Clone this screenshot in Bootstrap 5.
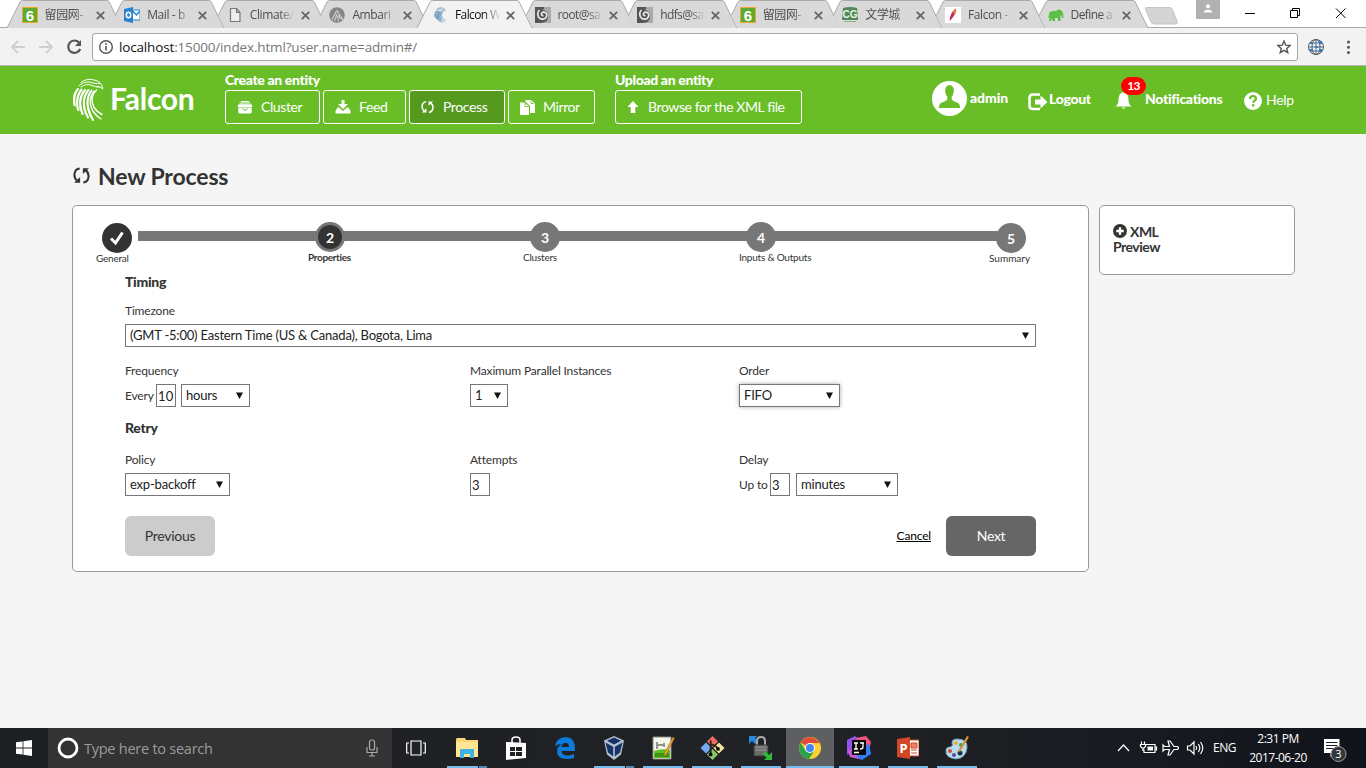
<!DOCTYPE html>
<html lang="en">
<head>
<meta charset="utf-8">
<title>Falcon Web UI</title>
<link href="https://cdn.jsdelivr.net/npm/bootstrap@5.3.0/dist/css/bootstrap.min.css" rel="stylesheet">
<style>
html,body{height:100%}
body{width:1366px;height:768px;overflow:hidden;background:#f5f5f5;font-family:Lato,"Noto Sans CJK SC",sans-serif;font-size:12px;line-height:16px;color:#333;letter-spacing:-.17px}
svg{display:block;flex:none}
.win{font-family:"Open Sans","Noto Sans CJK SC",sans-serif;letter-spacing:0}
/* browser chrome */
.tabstrip{height:28px;background:#fff;padding-left:6.600px;border-bottom:1px solid #a9a9a9}
.btab{flex:0 0 102.6px;height:28px;padding:7px 0 0 15px;position:relative;color:#4d4d4d}
.btab .shape{position:absolute;left:0;top:0}
.btab.on{z-index:2;color:#111}
.btab .fav,.btab .ttl,.btab .cls{position:relative}
.btab .ttl{width:45px;margin-left:7px;overflow:hidden;white-space:nowrap;font-size:12px;letter-spacing:-.4px;line-height:16px;-webkit-mask-image:linear-gradient(90deg,#000 65%,transparent 100%);mask-image:linear-gradient(90deg,#000 65%,transparent 100%)}
.btab .cls{margin:4px 0 0 6px}
.usr{width:24px;height:19px;background:#b1b1b1;margin-left:14.500px}
.toolbar{height:38px;background:#f2f2f2;border-bottom:1px solid #b5b5b5;padding:5px 0 0 10px}
.urlbox{width:1206px;height:28px;background:#fff;border:1px solid #a6a6a6;border-radius:3px;margin-left:10px;padding:0 6px 0 5px}
.urltext{font-size:13.5px;letter-spacing:-.16px;color:#777;margin-left:5px}
.urltext b{font-weight:400;color:#111}
/* falcon header */
.fhead{height:68px;background:#69be28;color:#fff;padding-left:72px}
.brand{width:153px;padding:12px 0 0 1px}
.brandname{font-size:30px;font-weight:700;line-height:36px;letter-spacing:-.25px;margin:2px 0 0 6px}
.hlabel{font-size:14px;font-weight:900;line-height:16px;height:24px;padding-top:6px;letter-spacing:-.35px;white-space:nowrap}
.hbtn{height:34px;border:1px solid #fff;border-radius:3px;color:#fff;font-size:14px;letter-spacing:-.4px;line-height:32px;padding:0 0 0 11px;white-space:nowrap}
.hbtn.act{background:#55991f}
.hbtn svg{margin-right:8px}
.hlink{font-size:14px;font-weight:900;letter-spacing:-.3px;line-height:18px;white-space:nowrap}
.nbadge{position:absolute;left:6px;top:-14px;width:25px;height:18px;border-radius:9px;background:#f00;font-size:12px;font-weight:700;line-height:18px;text-align:center;letter-spacing:-.6px}
/* page */
.ptitle{height:71px;padding:28px 0 0 73px}
.ptitle h1{font-size:23px;font-weight:700;line-height:28px;letter-spacing:-.15px;margin:0 0 0 8px}
.panel{background:#fff;border:1px solid #999;border-radius:5px}
.wiz{width:1017px;height:367px;padding:16px 52px 0 52px}
.xml{width:196px;height:70px;padding:18px 13px;font-size:14px;font-weight:700;line-height:15px;letter-spacing:-.5px}
.steps{display:grid;grid-template-columns:212px 215px 216px 250px 60px;margin-left:-29px;height:51px;position:relative}
.steps:before{content:"";position:absolute;left:42px;width:862px;top:9px;height:10px;background:#777}
.step{position:relative;font-size:10px;line-height:12px;white-space:nowrap;letter-spacing:-.22px}
.dot{width:30px;height:30px;border-radius:50%;background:#777;color:#fff;font-size:14px;font-weight:700;line-height:31px;text-align:center;margin-left:7px;margin-bottom:-1px}
.step.low{padding-top:1px}
.step.low:last-child{letter-spacing:0}
.dot.dark{background:#333}
.dot.cur{border:3px solid #777;line-height:25px}
.sect{font-size:14px;font-weight:900;letter-spacing:-.3px;line-height:18px;margin:0}
.fgrid{display:grid;grid-template-columns:345px 269px 297px}
.lab{display:block;line-height:16px;margin-bottom:5px;height:16px}
.fld{height:23px;border:1px solid #777;border-radius:0;background:#fff;color:#222;font-size:13px;letter-spacing:-.2px;line-height:21px;padding:0 0 0 4px;appearance:none;font-family:inherit;outline:0}
select.fld{background:#fff url("data:image/svg+xml,%3Csvg xmlns='http://www.w3.org/2000/svg' width='7' height='7'%3E%3Cpath d='M0 .5h7L3.5 7z' fill='%23111'/%3E%3C/svg%3E") no-repeat right 6px top 7px}
input.fld{width:20px;padding:0 0 0 1px}
.focus{box-shadow:0 0 4px rgba(0,0,0,.35)}
.wbtn{width:90px;height:40px;border:0;border-radius:6px;font-size:14px;letter-spacing:-.3px;padding:0}
/* taskbar */
.taskbar{height:40px;background:linear-gradient(90deg,#1d2023,#212225 60%,#171a20 85%,#10131a);color:#fff}
.search{width:344px;height:40px;background:#333;color:#9b9b9b;font-size:14.5px;letter-spacing:-.25px;padding:0 14px 0 9px}
.task{width:48px;margin-right:1px;height:40px;position:relative;display:flex;align-items:center;justify-content:center}
.task.run:after{content:"";position:absolute;left:4px;right:4px;bottom:0;height:2px;background:#76b9ed}
.task.multi:after{background:linear-gradient(90deg,#76b9ed 31px,#222 31px,#222 32px,#5488b0 32px)}
.task.front{background:#5d5f61}
.task.front:after{left:0;right:0}
.clock{font-size:12px;line-height:19px;letter-spacing:-.5px;width:64px;text-align:center;margin-left:9px}
</style>
</head>
<body class="d-flex flex-column">
<svg width="0" height="0" class="position-absolute">
<defs>
<symbol id="tab" viewBox="0 0 118 28"><path d="M6.2 15.6 13 2q.8-1.500 2.500-1.500H100q1.500 0 2.200 1.500L115 28H12.400z" fill="#d9d9d9"/><path d="M6.200 15.600 13 2q.8-1.500 2.500-1.500H100q1.500 0 2.200 1.500L115 28" fill="none" stroke="#aaa"/></symbol>
<symbol id="tabfull" viewBox="0 0 118 28"><path d="M0 28 13 2q.8-1.500 2.500-1.500H100q1.500 0 2.200 1.500L115 28" fill="currentColor" stroke="#aaa"/></symbol>
<symbol id="x" viewBox="0 0 8 8"><path d="M.7.7l6.600 6.600M7.300.7.700 7.300" stroke="#666" stroke-width="1.600"/></symbol>
<symbol id="six" viewBox="0 0 16 16"><path d="M.5.5h15v15H.5z" fill="#5aab2f" stroke="#f0a62c"/><text x="8" y="13.500" text-anchor="middle" font-family="Liberation Sans" font-weight="700" font-size="15" fill="#fff">6</text></symbol>
<symbol id="swirl" viewBox="0 0 16 16"><path d="M0 0h16v16H0z" fill="#555"/><path d="M9 0h7v16H6q8-1 7-8-1-5-6-5 3-1 2-3z" fill="#aaa"/><path d="M8.500 8.500Q6 9 6.500 6.500 8 4 11 6q2 3-1 5.500-4 2-6.500-1.500-2-4 1-7" fill="none" stroke="#e8e8e8" stroke-width="1.700"/></symbol>
<symbol id="cycle" viewBox="0 0 16 16"><path d="M6.300 1.500Q2 1.800 1.300 7q0 4 2.800 6M9.700 14.500q4.300-.3 5-5.500 0-4-2.800-6" fill="none" stroke="currentColor" stroke-width="1.900"/><path d="M1 14.800h5.700V9.500zM15 1.200H9.300v5.300z" fill="currentColor"/></symbol>
<symbol id="bird" viewBox="0 0 31 44"><g fill="none" stroke="currentColor" stroke-linecap="round"><path d="M8 4.500Q14-.5 22 2.200q7 1.500 7.800 8.800-2-2.500-6-2.200M6 7.500Q13 2 20 5q5 1 7 .5M8 9q6-4 11-1.500 4 2 7 1" stroke-width="1"/><path d="M5 11Q-.5 17 1.500 27M8.500 11.500Q2 20 5 32M12 12Q4 22 9.500 36" stroke-width="2.100"/><path d="M15.500 12Q6.500 23 15 39.500M18.500 12.500Q10 24 20 42" stroke-width="2"/><path d="M21 13Q14 22 19.500 32.500 23 38 28 41M23.500 12Q16 19 21 29.500 24 34 29 36.500" stroke-width="1.400"/><path d="M3.500 14Q1 19 2.500 28.500M10 13Q4 22 7 33M13.500 14Q8 23 12 36M17 14Q10 24 17.500 39.500" stroke-width=".6"/></g></symbol>
</defs></svg>

<div class="tabstrip win d-flex flex-shrink-0">
<div class="btab d-flex"><svg class="shape" style="color:#d9d9d9" width="118" height="28"><use href="#tabfull"/></svg><svg class="fav" width="16" height="16"><use href="#six"/></svg><span class="ttl">留园网-</span><svg class="cls" width="9" height="9"><use href="#x"/></svg></div>
<div class="btab d-flex"><svg class="shape" width="118" height="28"><use href="#tab"/></svg><svg class="fav" width="16" height="16" viewBox="0 0 16 16"><path d="M8 3h8v10H8z" fill="#fff" stroke="#2a82cf"/><path d="M8.500 4l4 4L16 4" fill="none" stroke="#2a82cf" stroke-width="1.500"/><path d="M0 2l9-2v16l-9-2z" fill="#2a82cf"/><ellipse cx="4.500" cy="8" rx="2.200" ry="2.800" fill="none" stroke="#fff" stroke-width="1.500"/></svg><span class="ttl">Mail - b</span><svg class="cls" width="9" height="9"><use href="#x"/></svg></div>
<div class="btab d-flex"><svg class="shape" width="118" height="28"><use href="#tab"/></svg><svg class="fav" width="16" height="16" viewBox="0 0 16 16"><path d="M3.500 1.500h6l3.500 4v9H3.500zM9.500 1.500v4H13" fill="#eee" stroke="#777" stroke-width="1.200"/></svg><span class="ttl">Climate/</span><svg class="cls" width="9" height="9"><use href="#x"/></svg></div>
<div class="btab d-flex"><svg class="shape" width="118" height="28"><use href="#tab"/></svg><svg class="fav" width="16" height="16" viewBox="0 0 16 16"><circle cx="8" cy="8" r="7.800" fill="#858585"/><path d="M8 3l1.500 3L14 12.500l-3-1.500-1.500-3M7.500 4 3 12.500M8 7l-2.500 7M8.500 9l1 5.500" fill="none" stroke="#ccc" stroke-width="1.200"/></svg><span class="ttl">Ambari</span><svg class="cls" width="9" height="9"><use href="#x"/></svg></div>
<div class="btab d-flex on"><svg class="shape" style="color:#f2f2f2" width="118" height="28"><use href="#tabfull"/></svg><svg class="fav" width="16" height="16" style="color:#3e7ca6"><use href="#bird"/></svg><span class="ttl" style="letter-spacing:-.6px">Falcon W</span><svg class="cls" width="9" height="9"><use href="#x"/></svg></div>
<div class="btab d-flex"><svg class="shape" width="118" height="28"><use href="#tab"/></svg><svg class="fav" width="16" height="16"><use href="#swirl"/></svg><span class="ttl" style="letter-spacing:-.6px">root@sa</span><svg class="cls" width="9" height="9"><use href="#x"/></svg></div>
<div class="btab d-flex"><svg class="shape" width="118" height="28"><use href="#tab"/></svg><svg class="fav" width="16" height="16"><use href="#swirl"/></svg><span class="ttl" style="letter-spacing:-.6px">hdfs@sa</span><svg class="cls" width="9" height="9"><use href="#x"/></svg></div>
<div class="btab d-flex"><svg class="shape" width="118" height="28"><use href="#tab"/></svg><svg class="fav" width="16" height="16"><use href="#six"/></svg><span class="ttl">留园网-</span><svg class="cls" width="9" height="9"><use href="#x"/></svg></div>
<div class="btab d-flex"><svg class="shape" width="118" height="28"><use href="#tab"/></svg><svg class="fav" width="16" height="16" viewBox="0 0 16 16"><path d="M1 1q7-2 14 0l1 12H0z" fill="#4f8a55"/><text x="8" y="11" text-anchor="middle" font-family="Liberation Sans" font-size="10" font-weight="700" fill="#e8f3e8">CG</text><path d="M2 14.500h12" stroke="#8cb58f"/></svg><span class="ttl">文学城</span><svg class="cls" width="9" height="9"><use href="#x"/></svg></div>
<div class="btab d-flex"><svg class="shape" width="118" height="28"><use href="#tab"/></svg><svg class="fav" width="16" height="16" viewBox="0 0 16 16"><path d="M0 0h16v16H0z" fill="#fff"/><path d="M4.500 14Q5 6 10.500 1.500 12 5 8 10q-1 2-3.500 4z" fill="#c92a5e"/><path d="M10.500 1.500Q12 4 10 7L7.500 5z" fill="#ee7c2b"/></svg><span class="ttl">Falcon -</span><svg class="cls" width="9" height="9"><use href="#x"/></svg></div>
<div class="btab d-flex"><svg class="shape" width="118" height="28"><use href="#tab"/></svg><svg class="fav" width="16" height="16" viewBox="0 0 16 16"><path d="M1 8q0-4 4-4l3 0q3-3 6 0 2 3 1.500 7h-1.500l-.5-3-1 1v5h-2.500v-3H7v3H4.500l-.5-3-1 3H1l1-4-1 1H0z" fill="#5bbf45"/></svg><span class="ttl" style="letter-spacing:-.6px">Define a</span><svg class="cls" width="9" height="9"><use href="#x"/></svg></div>
<svg class="ms-2" width="38" height="28" viewBox="0 0 38 28"><path d="M3.500 7.500h23q2 0 3 2l5 13q0 1.500-2 1.500H11q-2 0-3-2L2.500 9.500q-.5-2 1-2z" fill="#d4d4d4" stroke="#c4c4c4"/></svg>
<div class="usr d-flex justify-content-center"><svg class="mt-1" width="10" height="10" viewBox="0 0 10 10"><circle cx="5" cy="2.300" r="2" fill="#fff"/><path d="M1 8.500V7q4-3 8 0v1.500z" fill="#fff"/></svg></div>
<svg width="130" height="27" viewBox="0 0 130 27" fill="none" stroke="#000"><path d="M25 13.500h10M70.500 10.500h7v7h-7zM72.500 10V8.500h7v7h-1.500M116 8.500l9.500 9.500M125.500 8.500 116 18"/></svg>
</div>

<div class="toolbar win d-flex flex-shrink-0">
<svg width="72" height="28" viewBox="0 0 72 28" fill="none" stroke-width="1.800"><path d="M15 14H2M8 8l-6 6 6 6M29 14h13M36 8l6 6-6 6" stroke="#cfcfcf"/><path d="M69 9.500A6.200 6.200 0 1 0 70.200 16" stroke="#555" stroke-width="2.200"/><path d="M71 7v6h-6z" fill="#555"/></svg>
<div class="urlbox d-flex align-items-center"><svg width="16" height="16" viewBox="0 0 16 16"><circle cx="8" cy="8" r="6.300" fill="none" stroke="#555" stroke-width="1.400"/><path d="M8 7v4.500M8 4.300v1.600" stroke="#555" stroke-width="1.600"/></svg><span class="urltext"><b>localhost</b>:15000/index.html?user.name=admin#/</span>
<svg class="ms-auto" width="14" height="14" viewBox="0 0 14 14"><path d="M7 1l1.700 4.200 4.400.3-3.400 2.900 1.100 4.300L7 10.300l-3.800 2.400 1.100-4.300L.9 5.500l4.400-.3z" fill="none" stroke="#555" stroke-width="1.400"/></svg></div>
<svg class="ms-2 mt-1" width="50" height="20" viewBox="0 0 50 20"><circle cx="10" cy="10" r="7.500" fill="#eaf2fa" stroke="#555"/><path d="M2.500 10h15M10 2.500v15M4 6h12M4 14h12" stroke="#667" fill="none"/><ellipse cx="10" cy="10" rx="4" ry="7.500" fill="none" stroke="#556"/><path d="M4 5h3v2H4zM13 4h3v3h-3zM3 12h4v2H3zM9 9h3v2H9zM13 12h3v3h-3z" fill="#2e7cc7"/><g fill="#555"><circle cx="42.500" cy="5" r="1.500"/><circle cx="42.500" cy="10.200" r="1.500"/><circle cx="42.500" cy="15.400" r="1.500"/></g></svg>
</div>

<header class="fhead d-flex flex-shrink-0">
<div class="brand d-flex"><svg width="31" height="44"><use href="#bird"/></svg><div class="brandname">Falcon</div></div>
<div style="width:390px"><div class="hlabel">Create an entity</div>
<div class="d-flex">
<div class="hbtn d-flex align-items-center" style="width:95px;margin-right:3px"><svg width="16" height="13" viewBox="0 0 16 13"><path d="M4 0h8v1H4zM2.500 1.600h11v1H2.500zM1.500 3.200h13L15.500 6H.5zM1.300 6.400h13.400V11q0 1.500-1.500 1.500H2.800q-1.500 0-1.500-1.500z" fill="#fff"/><path d="M5.500 7.500q.3 1.600 2.500 1.600t2.500-1.600" fill="none" stroke="#69be28" stroke-width="1"/></svg>Cluster</div>
<div class="hbtn d-flex align-items-center" style="width:83px;margin-right:3px"><svg width="16" height="14" viewBox="0 0 16 14"><path d="M6.500 0h3v4H13L8 9 3 4h3.500z" fill="#fff"/><path d="M2.500 7.500h1.500L8 11l4-3.500h1.500L15.500 11v2.500H.5V11z" fill="#fff"/></svg>Feed</div>
<div class="hbtn act d-flex align-items-center" style="width:96px;margin-right:3px"><svg width="13" height="14" style="margin-right:9px"><use href="#cycle"/></svg>Process</div>
<div class="hbtn d-flex align-items-center" style="width:87px"><svg width="15" height="15" viewBox="0 0 15 15" style="margin-right:8px"><path d="M0 2.500h4.500L9 6.500V15H0z" fill="#fff"/><path d="M5.500 0H11l4 3.500V13H10V6L6.500 2.500H5.500z" fill="#fff"/><path d="M5 2.500v4h4M11 .5v3h3" stroke="#69be28" fill="none" stroke-width=".8"/></svg>Mirror</div>
</div></div>
<div><div class="hlabel">Upload an entity</div><div class="hbtn d-flex align-items-center" style="width:187px"><svg width="12" height="12" viewBox="0 0 12 12" style="margin-right:9px"><path d="M6 0l5.500 6H8.300v6H3.700V6H.5z" fill="#fff"/></svg>Browse for the XML file</div></div>
<div class="d-flex align-items-start" style="margin-left:130px">
<svg style="margin-top:15px" width="35" height="35" viewBox="0 0 35 35"><circle cx="17.500" cy="17.500" r="17.500" fill="#fff"/><path d="M17.500 4q4.500 0 4.300 6.500-.3 3.500-2.100 5v3q1 1.700 6.500 3.500 2 1.500 2 5H6.800q0-3.500 2-5 5.500-1.800 6.500-3.500v-3Q13.400 14 13.200 10.500q-.2-6.500 4.300-6.500z" fill="#69be28"/></svg>
<span class="hlink" style="margin:23px 0 0 3px;width:58px;letter-spacing:-.1px">admin</span>
<svg style="margin-top:27px" width="20" height="18" viewBox="0 0 20 18"><path d="M12 1.500H5Q1.500 1.500 1.500 5v7.500Q1.500 16 5 16h7" fill="none" stroke="#fff" stroke-width="2.600"/><path d="M7 6.500h5.500V2.500L19.500 9l-7 6.500v-4H7z" fill="#fff"/></svg>
<span class="hlink" style="margin:24px 0 0 1px;width:66px">Logout</span>
<div class="position-relative" style="margin-top:25px"><svg width="17" height="19" viewBox="0 0 17 19"><path d="M8.500 1q5 1 5 8 0 4 3 6.500H.5q3-2.500 3-6.500 0-7 5-8z" fill="#fff"/><path d="M6.500 16.500h4q-2 2.500-4 0z" fill="#fff"/></svg><span class="nbadge">13</span></div>
<span class="hlink" style="margin:24px 0 0 13px;width:99px">Notifications</span>
<svg style="margin-top:26px" width="18" height="18" viewBox="0 0 18 18"><circle cx="9" cy="9" r="9" fill="#fff"/><path d="M6 7q0-3 3-3t3 2.600q0 1.500-1.600 2.200-1.100.6-1.100 2" fill="none" stroke="#69be28" stroke-width="2.200"/><path d="M8 12.200h2.400v2.300H8z" fill="#69be28"/></svg>
<span class="hlink" style="margin:25px 0 0 4px;font-weight:400">Help</span>
</div>
</header>

<main class="flex-grow-1">
<div class="ptitle d-flex"><svg style="margin-top:5px" width="17" height="17"><use href="#cycle"/></svg><h1>New Process</h1></div>
<div class="d-flex align-items-start" style="margin-left:72px;gap:10px">
<section class="panel wiz">
<div class="steps">
<div class="step low"><div class="dot dark" style="margin-left:6px"><svg width="30" height="30" viewBox="0 0 30 30"><path d="M9 15.500l4.500 4.500L20.500 9.500" fill="none" stroke="#fff" stroke-width="3"/></svg></div>General</div>
<div class="step fw-bold" style="letter-spacing:-.35px"><div class="dot dark cur">2</div>Properties</div>
<div class="step"><div class="dot">3</div>Clusters</div>
<div class="step"><div class="dot">4</div>Inputs &amp; Outputs</div>
<div class="step low"><div class="dot">5</div>Summary</div>
</div>
<h2 class="sect">Timing</h2>
<label class="lab" style="margin-top:12px">Timezone</label>
<select class="fld w-100 d-block"><option>(GMT -5:00) Eastern Time (US &amp; Canada), Bogota, Lima</option></select>
<div class="fgrid" style="margin-top:16px">
<div><label class="lab">Frequency</label><div class="d-flex align-items-center"><span style="width:31px">Every</span><input class="fld" value="10" style="letter-spacing:.2px"><select class="fld" style="width:69px;margin-left:5px"><option>hours</option></select></div></div>
<div><label class="lab">Maximum Parallel Instances</label><select class="fld" style="width:38px"><option>1</option></select></div>
<div><label class="lab">Order</label><select class="fld focus" style="width:101px"><option>FIFO</option></select></div>
</div>
<h2 class="sect" style="margin-top:12px">Retry</h2>
<div class="fgrid" style="margin-top:15px">
<div><label class="lab">Policy</label><select class="fld" style="width:105px"><option>exp-backoff</option></select></div>
<div><label class="lab">Attempts</label><input class="fld" value="3"></div>
<div><label class="lab">Delay</label><div class="d-flex align-items-center"><span style="width:31px" class="text-nowrap">Up to</span><input class="fld" value="3"><select class="fld" style="width:102px;margin-left:6px"><option>minutes</option></select></div></div>
</div>
<div class="d-flex align-items-center" style="margin-top:20px"><button class="wbtn" style="background:#ccc;color:#333">Previous</button><a class="ms-auto text-black text-decoration-underline" style="margin-right:15px">Cancel</a><button class="wbtn text-white" style="background:#666">Next</button></div>
</section>
<aside class="panel xml"><div class="d-flex"><svg width="14" height="14" viewBox="0 0 13 13" style="margin-right:3px"><circle cx="6.500" cy="6.500" r="6.500" fill="#333"/><path d="M6.500 3v7M3 6.500h7" stroke="#fff" stroke-width="2.200"/></svg>XML</div>Preview</aside>
</div>
</main>

<footer class="taskbar win d-flex align-items-center flex-shrink-0">
<div class="d-flex justify-content-center" style="width:48px"><svg width="16" height="16" viewBox="0 0 16 16"><path d="M0 2.300 6.600 1.400v6.200H0zM7.400 1.300 16 0v7.600H7.400zM0 8.400h6.600v6.200L0 13.700zM7.400 8.400H16V16l-8.600-1.300z" fill="#fff"/></svg></div>
<div class="search d-flex align-items-center"><svg width="22" height="22" viewBox="0 0 22 22"><circle cx="11" cy="11" r="9" fill="none" stroke="#fff" stroke-width="2.800"/></svg><span style="margin:2px 0 0 5px">Type here to search</span><svg class="ms-auto" width="12" height="18" viewBox="0 0 12 18" fill="none" stroke="#aaa" stroke-width="1.200"><rect x="3.500" y="1" width="5" height="10" rx="2"/><path d="M1 8v5.500h10V8M6 13.500V17M3 17h6"/></svg></div>
<div class="task"><svg width="20" height="16" viewBox="0 0 20 16" fill="none" stroke="#fff" stroke-width="1.200"><path d="M5 1h10v14H5zM3 3H.7v10H3M17 3h2.300v10H17"/></svg></div>
<div class="task run multi" style="margin-left:2px"><svg width="22" height="22" viewBox="0 0 22 22"><path d="M0 3q0-2 1-2h8l1 2h12v17H0z" fill="#f9d977"/><path d="M0 5h22v15H0z" fill="#ffe694"/><path d="M4 12h14v9h-4v-4H8v4H4z" fill="#3eb3e6"/></svg></div>
<div class="task"><svg width="22" height="24" viewBox="0 0 22 24"><path d="M7 7V4q0-3 4-3t4 3v3" fill="none" stroke="#fff" stroke-width="1.500"/><path d="M1 6l20 1v15L1 24z" fill="#fff"/><path d="M5 11h5v4H5zM11 11h6v4h-6zM5 16h5v4H5zM11 16h6v4h-6z" fill="#222"/></svg></div>
<div class="task"><svg width="20" height="22" viewBox="0 0 20 22"><path d="M0 10Q1 1 10 0q10 0 10 12v2H6.500q.5 4.500 6 4.500 3 0 6.500-1.500v4q-3 1-7 1Q2 22 2 14q0-5 5-7Q2 7 0 10zM6.500 10h7.500q0-4-3.500-4-3.500 0-4 4z" fill="#0a7bdb" fill-rule="evenodd"/></svg></div>
<div class="task run multi"><svg width="20" height="24" viewBox="0 0 20 24"><path d="M10 0l10 4.500-3 14L10 24l-7-5.500L0 4.500z" fill="#b4c1d2"/><path d="M10 1.500l7 3.300L10 8.500 3 4.800z" fill="#163463"/><path d="M1.500 6.500l7.700 4.200v9.800L4 16.500zM18.500 6.500l-7.700 4.200v9.800l5.200-4z" fill="#163463"/></svg></div>
<div class="task run"><svg width="23" height="24" viewBox="0 0 23 24"><path d="M1 1h18v22H1z" fill="#f4f7e8" stroke="#888"/><path d="M2 15q8-3 16-1v8H2z" fill="#62bd20"/><path d="M5 6v7M6 9h5M12 7v4" stroke="#333"/><path d="M3 17h14v4H3z" fill="#3c9411"/><path d="M21 1l1.500 1L14 19l-2 1 .5-3z" fill="#f0a52e" stroke="#9b6321" stroke-width=".5"/></svg></div>
<div class="task run"><svg width="25" height="24" viewBox="0 0 26 26"><path d="M13 0l6 6-6 6-6-6z" fill="#ef6a5f"/><path d="M6 7l6 6-6 6-6-6z" fill="#72a9f2"/><path d="M20 7l6 6-6 6-6-6z" fill="#f5e79a"/><path d="M13 14l6 6-6 6-6-6z" fill="#8bc565"/><path d="M11 5v15M11 9q7 1 7 5" fill="none" stroke="#29231f" stroke-width="2"/><circle cx="11" cy="20" r="2"/><circle cx="19" cy="14" r="2"/></svg></div>
<div class="task run"><svg width="24" height="24" viewBox="0 0 24 24"><path d="M0 0h8L6 2l3 3-3 3-3-3-3 3z" fill="#2688df"/><path d="M8 10V5q0-4 4-4t4 4v5" fill="none" stroke="#aaa" stroke-width="2"/><path d="M5 9h14v11H5z" fill="#6a6a6a" stroke="#383838"/><path d="M6 11h12M6 14h12" stroke="#999"/><path d="M23 16v8h-8l2.500-2.500-4-4 2.500-2 4 3.500z" fill="#2dba38"/></svg></div>
<div class="task run front"><svg width="22" height="22" viewBox="0 0 22 22"><circle cx="11" cy="11" r="11" fill="#fdd132"/><path d="M11 11 1.500 5.500A11 11 0 0 1 20.500 6H11z" fill="#e24a3b"/><path d="M1.500 5.500A11 11 0 0 0 10 22l5-8-8.500-.5z" fill="#2ba24c"/><circle cx="11" cy="11" r="5" fill="#fff"/><circle cx="11" cy="11" r="4" fill="#4285f4"/></svg></div>
<div class="task run"><svg width="24" height="24" viewBox="0 0 24 24"><path d="M0 4l8-4 5 4-5 10-8 5z" fill="#9451e8"/><path d="M9 2l10-2 5 6-2 8-8-4z" fill="#f2577a"/><path d="M22 8l2 10-9 6-12-4 5-6z" fill="#317df5"/><path d="M0 13l7 1 5 9-9-2z" fill="#c45ad0"/><path d="M5 4h14v15H5z" fill="#090909"/><path d="M7 7h4M9 7v6M7 13h4M13 7h4M16 7v4q0 2-3 2M7 16.500h5" fill="none" stroke="#fff" stroke-width="1.300"/></svg></div>
<div class="task run"><svg width="22" height="22" viewBox="0 0 22 22"><path d="M11 3h11v16H11z" fill="#fff" stroke="#d24726"/><path d="M14 6h6v5h-6zM14 13h6M14 16h6" fill="#e98369" stroke="#d24726"/><path d="M0 2l13-2v22L0 20z" fill="#d24726"/><text x="6.500" y="16" text-anchor="middle" font-size="13" font-weight="700" fill="#fff">P</text></svg></div>
<div class="task run"><svg width="24" height="24" viewBox="0 0 24 24"><path d="M12 3q11 0 10 9-1 10-11 11Q0 22 1 14q0-3 4-3 4-1 2-4 0-4 5-4z" fill="#b9dcef" stroke="#6d9fb8"/><circle cx="11" cy="7" r="2" fill="#ecaa36"/><circle cx="16" cy="9" r="2" fill="#37a448"/><circle cx="5" cy="15" r="2" fill="#dc4235"/><circle cx="9" cy="19" r="2" fill="#6843a1"/><circle cx="15" cy="17" r="2.500" fill="#1f3441"/><path d="M22 0l2 1-9 15-2-1z" fill="#d99138"/></svg></div>
<svg style="margin-left:134px" width="90" height="20" viewBox="0 0 90 20" fill="none" stroke="#fff" stroke-width="1.200"><path d="M2 13l5.500-6 5.500 6"/><path d="M30 6.500h9v8H28v-3M39.500 9h1v3h-1M25.500 3.500v2.500M28.500 3.500v2.500M24.500 6.500h5v2l-1.500 1.500h-2l-1.500-1.500zM27 10v3"/><path d="M31.500 8.500h5.500v4h-5.500z" fill="#fff" stroke="none"/><path d="M48.500 8.500h5L52 3h2l4 5.500h3.500q2 1.500 0 3H58L54 17h-2l1.500-5.500h-5L47 13V7z"/><path d="M71.500 8h2.500l4-4v12l-4-4h-2.500zM80 8q1.500 2 0 4M82.300 6q3 4 0 8M84.500 4q4.500 6 0 12"/></svg>
<span style="margin-left:7px;width:24px;letter-spacing:-.5px">ENG</span>
<div class="clock">2:31 PM<br>2017-06-20</div>
<svg style="margin-left:14px" width="30" height="28" viewBox="0 0 30 28"><path d="M0 5h15.500v14h-5l-4 4v-4H0z" fill="#fff"/><path d="M2 8.500h11.500M2 11.500h11.500M2 14.500h7" stroke="#222"/><circle cx="14.500" cy="20" r="7.500" fill="#33363a" stroke="#999"/><text x="14.500" y="24" text-anchor="middle" font-size="11" fill="#fff">3</text></svg>
</footer>
<script src="https://cdn.jsdelivr.net/npm/bootstrap@5.3.0/dist/js/bootstrap.bundle.min.js"></script>
</body>
</html>
